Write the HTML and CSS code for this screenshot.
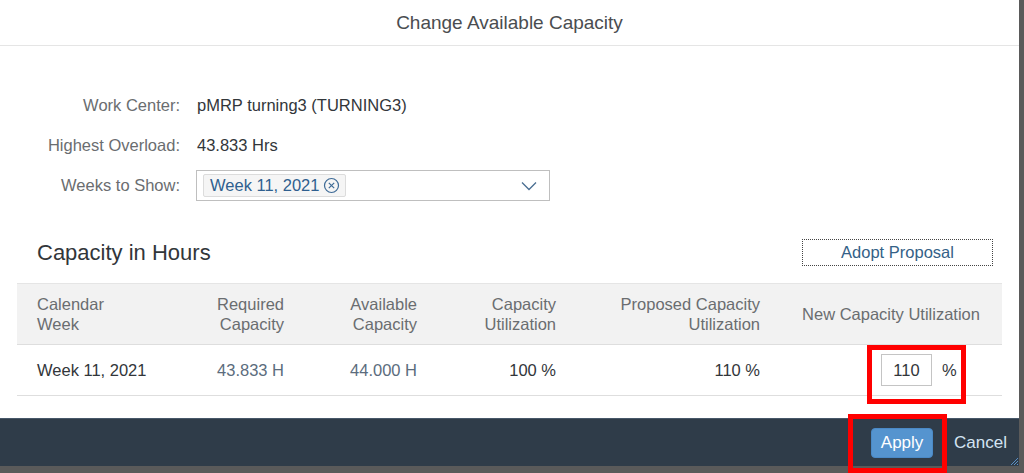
FILE: index.html
```html
<!DOCTYPE html>
<html lang="en">
<head>
    <meta charset="UTF-8">
    <title>Change Available Capacity</title>
    <link rel="stylesheet" href="styles.css">
</head>
<body>
<div class="screen">
    <div class="dialog">
        <div class="dialog-header">Change Available Capacity</div>
        <div class="dialog-content">
            <div class="form">
                <label>Work Center:</label>
                <span class="value">pMRP turning3 (TURNING3)</span>
                <label>Highest Overload:</label>
                <span class="value">43.833 Hrs</span>
                <label>Weeks to Show:</label>
                <div class="select">
                    <span class="token">Week 11, 2021
                        <svg class="token-close" width="17" height="17" viewBox="0 0 17 17">
                            <circle cx="8.5" cy="8.5" r="7" fill="none" stroke="#3d6a96" stroke-width="1.2"/>
                            <path d="M5.8 5.8 L11.2 11.2 M11.2 5.8 L5.8 11.2" stroke="#3d6a96" stroke-width="1.2"/>
                        </svg>
                    </span>
                    <svg class="chevron" width="16" height="10" viewBox="0 0 16 10">
                        <path d="M1 1.5 L8 8.5 L15 1.5" fill="none" stroke="#4a6e92" stroke-width="1.3"/>
                    </svg>
                </div>
            </div>
            <div class="toolbar">
                <span class="section-title">Capacity in Hours</span>
                <button class="adopt">Adopt Proposal</button>
            </div>
            <table class="capacity">
                <colgroup>
                    <col style="width:178px">
                    <col style="width:109px">
                    <col style="width:133px">
                    <col style="width:139px">
                    <col style="width:204px">
                    <col style="width:222px">
                </colgroup>
                <thead>
                <tr>
                    <th class="left">Calendar<br>Week</th>
                    <th>Required<br>Capacity</th>
                    <th>Available<br>Capacity</th>
                    <th>Capacity<br>Utilization</th>
                    <th>Proposed Capacity<br>Utilization</th>
                    <th class="center">New Capacity Utilization</th>
                </tr>
                </thead>
                <tbody>
                <tr>
                    <td class="left">Week 11, 2021</td>
                    <td class="muted">43.833 H</td>
                    <td class="muted">44.000 H</td>
                    <td>100 %</td>
                    <td>110 %</td>
                    <td class="new-util">
                        <div class="util-box">
                            <input type="text" value="110">
                            <span>%</span>
                        </div>
                    </td>
                </tr>
                </tbody>
            </table>
        </div>
        <div class="dialog-footer">
            <button class="apply">Apply</button>
            <button class="cancel">Cancel</button>
            <svg class="grip" width="8" height="8" viewBox="0 0 8 8">
                <path d="M1 8 L8 1 M4 8 L8 4 M7 8 L8 7" stroke="#5b8fc4" stroke-width="1"/>
            </svg>
        </div>
    </div>
    <div class="mark mark-input"></div>
    <div class="mark mark-apply"></div>
</div>
</body>
</html>
```

FILE: styles.css
```css
body {
    margin: 0;
    background-color: #5c5c5c;
    font-family: "Liberation Sans", Arial, sans-serif;
    font-size: 16.5px;
    color: #32363a;
    overflow: hidden;
}
.screen {
    position: relative;
    width: 1024px;
    height: 473px;
    background-color: #5a5a5a;
}
.dialog {
    width: 1019px;
    height: 466px;
    background-color: #fff;
    display: flex;
    flex-direction: column;
}
.dialog-header {
    height: 45px;
    border-bottom: 1px solid #e5e5e5;
    display: flex;
    align-items: center;
    justify-content: center;
    font-size: 19px;
    color: #4a4d50;
}
.dialog-content {
    flex: 1;
    padding-top: 39px;
}
.form {
    display: grid;
    grid-template-columns: 180px 354px;
    grid-auto-rows: 40px;
    column-gap: 16px;
    align-items: center;
}
.form label {
    text-align: right;
    color: #6a6d70;
}
.form .value {
    padding-left: 1px;
}
.select {
    height: 31px;
    box-sizing: border-box;
    border: 1px solid #bfbfbf;
    display: flex;
    align-items: center;
    justify-content: space-between;
    padding: 0 12px 0 6px;
}
.token {
    display: flex;
    align-items: center;
    gap: 4px;
    height: 23px;
    box-sizing: border-box;
    padding: 0 5px 0 6px;
    background-color: #f5f5f5;
    border: 1px solid #dcdcdc;
    border-radius: 2px;
    color: #2f5f8f;
}
.chevron {
    margin-top: 1px;
}
.toolbar {
    margin-top: 23px;
    height: 50px;
    display: flex;
    align-items: center;
    justify-content: space-between;
    padding: 0 26px 0 37px;
}
.section-title {
    font-size: 22px;
    color: #32363a;
}
.adopt {
    width: 191px;
    height: 27px;
    margin-top: -1px;
    background: #fff;
    border: 1px dotted #444;
    font-family: inherit;
    font-size: 16.5px;
    color: #346187;
}
.capacity {
    margin: 5px 0 0 17px;
    border-collapse: collapse;
    table-layout: fixed;
    width: 985px;
}
.capacity th {
    height: 60px;
    padding: 0 20px;
    background-color: #f2f2f2;
    border-top: 1px solid #e5e5e5;
    border-bottom: 1px solid #dedede;
    font-weight: normal;
    color: #6a6d70;
    text-align: right;
    line-height: 20px;
    white-space: nowrap;
}
.capacity td {
    height: 50px;
    padding: 0 20px;
    border-bottom: 1px solid #dedede;
    text-align: right;
    white-space: nowrap;
}
.capacity .left {
    text-align: left;
}
.capacity th.center {
    text-align: center;
    padding: 0 17px;
}
.capacity .muted {
    color: #5b6c7d;
}
.capacity td.new-util {
    padding: 0 0 0 101px;
}
.util-box {
    display: flex;
    align-items: center;
    gap: 10px;
}
.util-box input {
    width: 51px;
    height: 32px;
    box-sizing: border-box;
    border: 1px solid #c4c4c4;
    text-align: center;
    font-family: inherit;
    font-size: 16.5px;
    color: #32363a;
    padding: 0;
}
.dialog-footer {
    position: relative;
    height: 47px;
    border-top: 1px solid #475869;
    background-color: #2f3c49;
    display: flex;
    align-items: center;
    justify-content: flex-end;
    gap: 21px;
    padding-right: 12px;
}
.apply {
    width: 62px;
    height: 30px;
    border: 1px solid #4a89c6;
    border-radius: 4px;
    background-color: #5594cf;
    color: #fff;
    font-family: inherit;
    font-size: 17px;
}
.cancel {
    background: none;
    border: none;
    padding: 0;
    color: #d4e4f3;
    font-family: inherit;
    font-size: 17px;
}
.grip {
    position: absolute;
    right: 1px;
    bottom: 1px;
}
.mark {
    position: absolute;
    box-sizing: border-box;
    border: 5px solid #ff0000;
    width: 99px;
    height: 59px;
}
.mark-input {
    left: 867px;
    top: 345px;
}
.mark-apply {
    left: 848px;
    top: 414px;
}
```
